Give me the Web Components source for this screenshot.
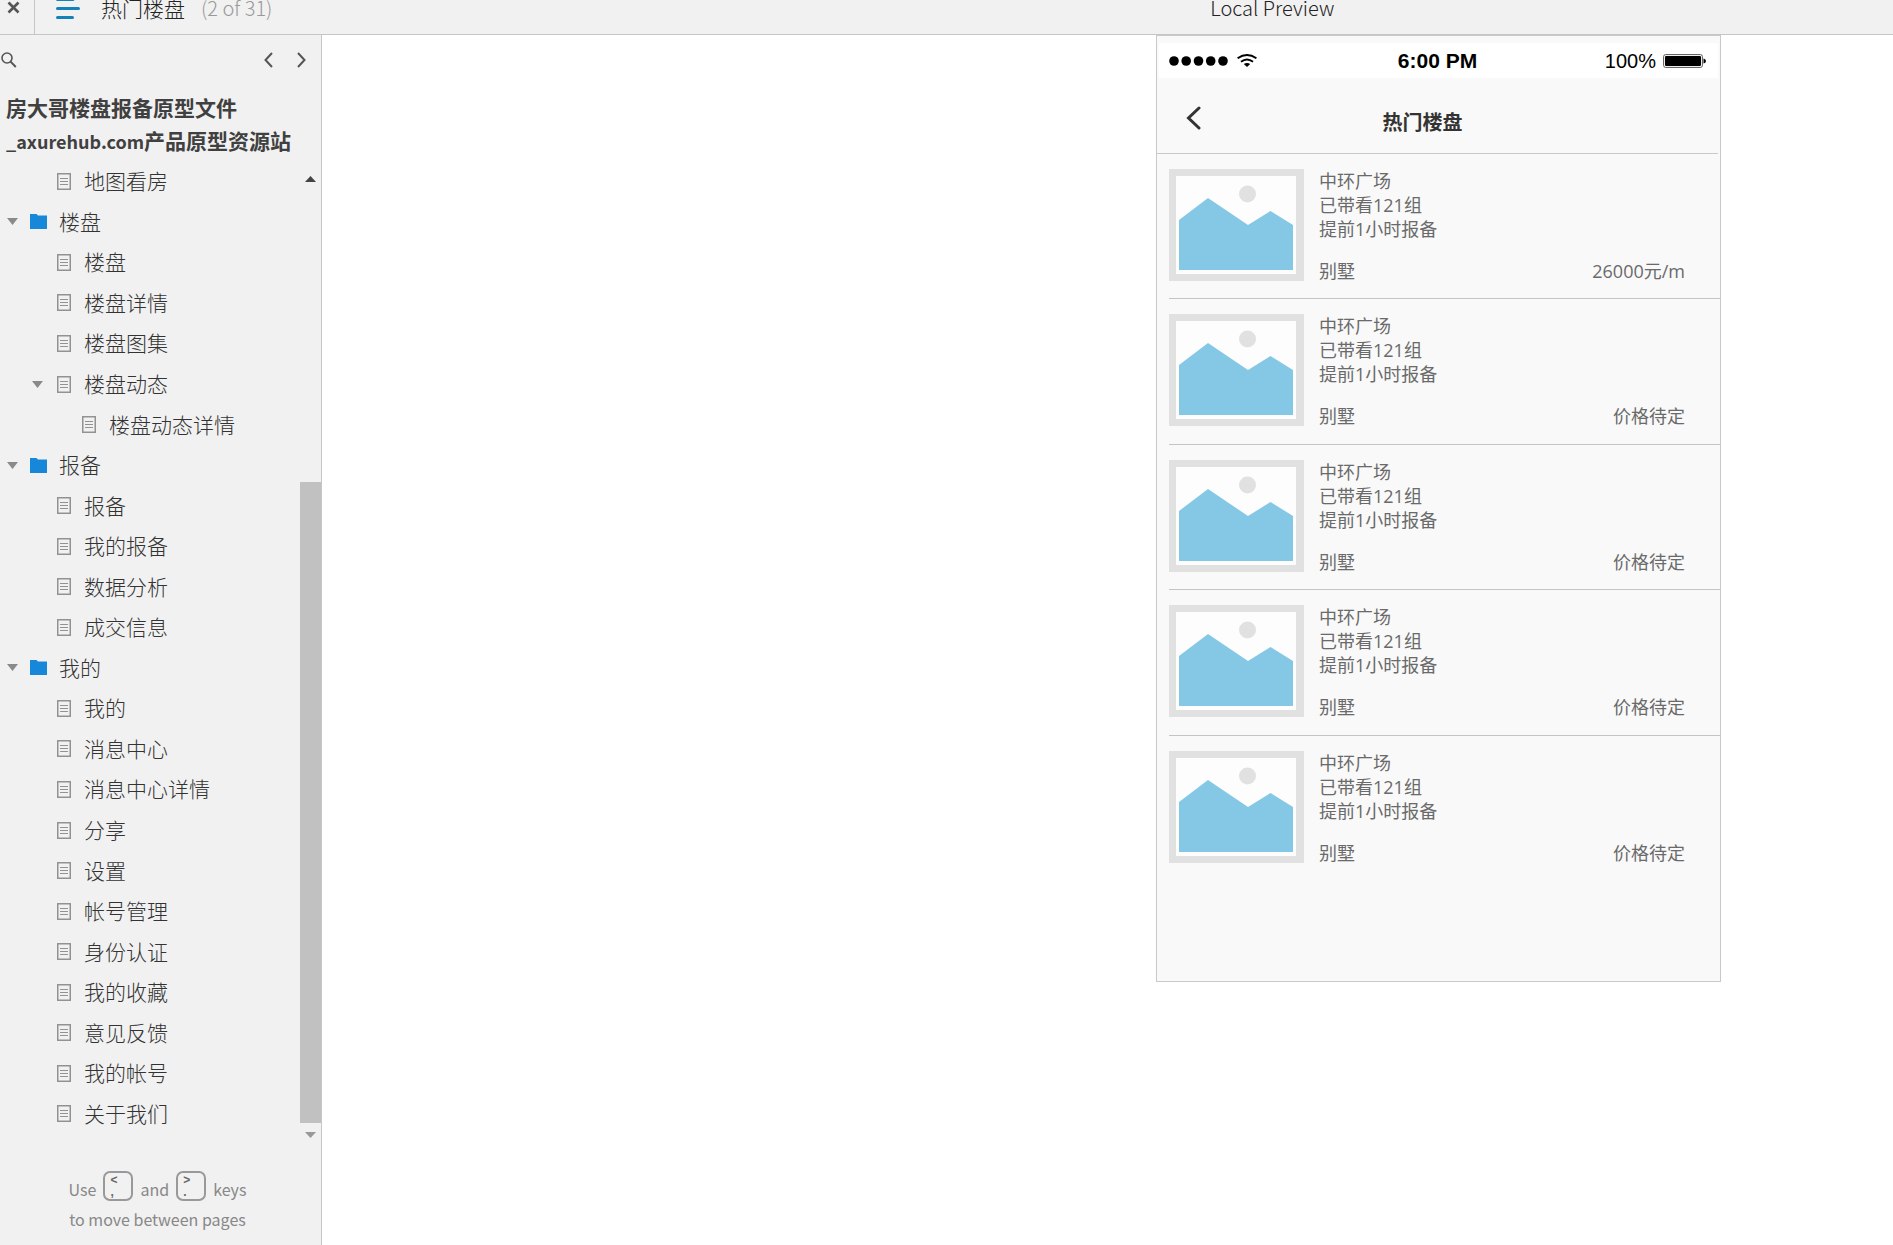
<!DOCTYPE html>
<html lang="zh-CN">
<head>
<meta charset="utf-8">
<title>热门楼盘</title>
<style>
html, body { height: 100%; margin: 0; }
body {
  display: flex; flex-direction: column; background: #fff; color: #333;
  font-family: "Noto Sans CJK SC", "Noto Sans", sans-serif; font-size: 21px; font-weight: 300;
}
.latin { font-size: 18px; }
</style>
</head>
<body>
<top-bar count="(2 of 31)"><span>热门楼盘</span><span slot="mode">Local Preview</span></top-bar>
<work-area>
  <side-panel slot="side">
    <span slot="title">房大哥楼盘报备原型文件<span class="latin">_axurehub.com</span>产品原型资源站</span>
    <tree-item level="1">地图看房</tree-item>
    <tree-item level="0" kind="folder" open>楼盘</tree-item>
    <tree-item level="1">楼盘</tree-item>
    <tree-item level="1">楼盘详情</tree-item>
    <tree-item level="1">楼盘图集</tree-item>
    <tree-item level="1" open>楼盘动态</tree-item>
    <tree-item level="2">楼盘动态详情</tree-item>
    <tree-item level="0" kind="folder" open>报备</tree-item>
    <tree-item level="1">报备</tree-item>
    <tree-item level="1">我的报备</tree-item>
    <tree-item level="1">数据分析</tree-item>
    <tree-item level="1">成交信息</tree-item>
    <tree-item level="0" kind="folder" open>我的</tree-item>
    <tree-item level="1">我的</tree-item>
    <tree-item level="1">消息中心</tree-item>
    <tree-item level="1">消息中心详情</tree-item>
    <tree-item level="1">分享</tree-item>
    <tree-item level="1">设置</tree-item>
    <tree-item level="1">帐号管理</tree-item>
    <tree-item level="1">身份认证</tree-item>
    <tree-item level="1">我的收藏</tree-item>
    <tree-item level="1">意见反馈</tree-item>
    <tree-item level="1">我的帐号</tree-item>
    <tree-item level="1">关于我们</tree-item>
  </side-panel>
  <phone-screen>
    <span slot="title">热门楼盘</span>
    <house-card price="26000元/m" category="别墅"><span>中环广场</span><span>已带看121组</span><span>提前1小时报备</span></house-card>
    <house-card price="价格待定" category="别墅"><span>中环广场</span><span>已带看121组</span><span>提前1小时报备</span></house-card>
    <house-card price="价格待定" category="别墅"><span>中环广场</span><span>已带看121组</span><span>提前1小时报备</span></house-card>
    <house-card price="价格待定" category="别墅"><span>中环广场</span><span>已带看121组</span><span>提前1小时报备</span></house-card>
    <house-card price="价格待定" category="别墅" last><span>中环广场</span><span>已带看121组</span><span>提前1小时报备</span></house-card>
  </phone-screen>
</work-area>
<script>
const base = `:host,*{box-sizing:border-box}
button{border:0;background:none;padding:0;margin:0;color:inherit;font:inherit;display:flex;cursor:pointer}
svg{display:block}`;

class Part extends HTMLElement {
  connectedCallback() {
    if (this.shadowRoot) return;
    this.attachShadow({ mode: 'open' }).innerHTML = `<style>${base}${this.css()}</style>${this.html()}`;
  }
}

customElements.define('top-bar', class extends Part {
  css() { return `
    :host{display:grid;grid-template-columns:minmax(0,1213fr) auto minmax(0,560fr);flex:none;height:35px;
      overflow:hidden;background:#f1f1f1;border-bottom:1px solid #c6c6c6;color:#222}
    .left{display:flex}
    .close{flex:none;width:35px;height:34px;border-right:1px solid #c6c6c6;padding:1px 0 0 7px}
    .menu{margin-left:21px}
    .row{display:flex;height:16px;align-items:center;line-height:30px;white-space:nowrap}
    .name{margin-left:21px}
    .count{margin-left:16px;color:#999;font-size:20px}
    .mode{font-size:20px}`; }
  html() { return `
    <div class="left">
      <button class="close" aria-label="Close"><svg width="13" height="13" viewBox="0 0 13 13"><path d="M1.5 1.5l10 10M11.5 1.5l-10 10" stroke="#555" stroke-width="2.6"/></svg></button>
      <button class="menu" aria-label="Pages"><svg width="24" height="20" viewBox="0 0 24 20"><path d="M1.5-.5H17M1.5 8.5H22.5M1.5 17.5H16.5" stroke="#1482ba" stroke-width="3" stroke-linecap="round"/></svg></button>
      <div class="row"><div class="name"><slot></slot></div><div class="count">${this.getAttribute('count')}</div></div>
    </div>
    <div class="row mode"><slot name="mode"></slot></div>`; }
});

customElements.define('work-area', class extends Part {
  css() { return `
    :host{display:flex;flex:1;min-height:0}
    aside{flex:none;width:322px;display:flex}
    main{flex:1;min-width:0;overflow:hidden;display:grid;grid-template-columns:minmax(0,834fr) 565px minmax(0,172fr);align-items:start}
    main ::slotted(*){grid-column:2}`; }
  html() { return `<aside><slot name="side"></slot></aside><main><slot></slot></main>`; }
});

customElements.define('side-panel', class extends Part {
  css() { return `
    :host{display:flex;flex-direction:column;flex:1;min-width:0;background:#f1f1f1;border-right:1px solid #c6c6c6}
    .tools{display:flex;align-items:center;height:49px;padding:0 15px 0 1px}
    .tools .prev{margin-left:auto;margin-right:24px}
    h1{margin:7px 6px 2px;font-size:21px;line-height:33px;font-weight:700;color:#404040}
    .body{display:flex;flex:1;min-height:0}
    nav{flex:1;display:flex;flex-direction:column;margin-bottom:13px}
    footer{display:flex;flex-direction:column;align-items:center;height:99px;padding:25px 6px 0 0;font-size:16px;color:#888;font-weight:400}
    .keys{display:flex;gap:7px;line-height:32px;height:32px;align-items:flex-start}
    .keys span{padding-top:2px}
    kbd{width:30px;height:30px;border:2px solid #999;border-radius:7px;padding:1px 0 0 5px;display:flex;flex-direction:column;
      font:700 12px/12px "Liberation Sans",sans-serif;color:#666}
    .move{line-height:32px}`; }
  html() { return `
    <div class="tools">
      <button aria-label="Search"><svg width="16" height="16" viewBox="0 0 16 16" fill="none" stroke="#555"><circle cx="6" cy="6" r="5" stroke-width="1.6"/><path d="M9.6 9.6l5.2 5.4" stroke-width="2"/></svg></button>
      <button class="prev" aria-label="Previous page"><svg width="9" height="16" viewBox="0 0 9 16"><path d="M8 1L1.5 8 8 15" fill="none" stroke="#555" stroke-width="2"/></svg></button>
      <button aria-label="Next page"><svg width="9" height="16" viewBox="0 0 9 16"><path d="M1 1L7.500 8 1 15" fill="none" stroke="#555" stroke-width="2"/></svg></button>
    </div>
    <h1><slot name="title"></slot></h1>
    <div class="body"><nav><slot></slot></nav><scroll-rail></scroll-rail></div>
    <footer>
      <div class="keys"><span>Use</span><kbd><b>&lt;</b><b>,</b></kbd><span>and</span><kbd><b>&gt;</b><b>.</b></kbd><span>keys</span></div>
      <div class="move">to move between pages</div>
    </footer>`; }
});

customElements.define('scroll-rail', class extends Part {
  css() { return `
    :host{display:flex;flex-direction:column;flex:none;width:21px;margin-top:7px}
    button{height:23px;align-items:center;justify-content:center}
    .gap{flex:292}
    .thumb{flex:641;background:#c1c1c1}`; }
  html() { return `
    <button aria-label="Scroll up"><svg width="11" height="6" viewBox="0 0 11 6"><path d="M0 6L5.500 0 11 6z" fill="#444"/></svg></button>
    <div class="gap"></div><div class="thumb"></div>
    <button aria-label="Scroll down"><svg width="11" height="6" viewBox="0 0 11 6"><path d="M0 0L5.500 6 11 0z" fill="#999"/></svg></button>`; }
});

customElements.define('tree-item', class extends Part {
  css() { return `
    :host{display:flex;flex:1;align-items:center;min-height:0;padding-left:calc(7px + 25px * ${this.getAttribute('level')})}
    .toggle{width:23px;flex:none;padding-top:2px}
    a{display:flex;align-items:center;color:inherit;text-decoration:none;line-height:30px;white-space:nowrap}
    a svg{margin:2px 12px 0 0}
    a svg.page{margin:2px 13px 0 2px}`; }
  html() {
    const icon = this.getAttribute('kind') === 'folder'
      ? `<svg width="17" height="15" viewBox="0 0 17 15"><path d="M0 0H6.500L8 1.500H17V15H0z" fill="#1787d9"/></svg>`
      : `<svg class="page" width="14" height="17" viewBox="0 0 14 17" fill="none" stroke="#929292"><rect x=".75" y=".75" width="12.500" height="15.500" stroke-width="1.500"/><path d="M3 5.500H11M3 8.500H11M3 11.500H11" stroke-width="1.200"/></svg>`;
    const arrow = `<svg width="11" height="7" viewBox="0 0 11 7"><path d="M0 0H11L5.500 7z" fill="#8a8a8a"/></svg>`;
    return (this.hasAttribute('open') ? `<button class="toggle" aria-label="Collapse">${arrow}</button>` : `<span class="toggle"></span>`)
      + `<a href="#">${icon}<slot></slot></a>`;
  }
});

customElements.define('phone-screen', class extends Part {
  css() { return `
    :host{display:flex;flex-direction:column;min-height:947px;background:#f9f9f9;border:1px solid #c9c9c9;padding-bottom:100px}
    .status{display:grid;grid-template-columns:1fr auto 1fr;align-items:center;height:35px;margin:7px 2px 0;padding:0 12px 0 10px;
      background:#fff;color:#000;font:400 20px/24px "Liberation Sans",sans-serif}
    .signal,.power{display:flex;align-items:center;gap:9px}
    .power{justify-content:flex-end;gap:7px}
    .time{font-weight:700;font-size:21px}
    .bar{display:flex;align-items:center;height:76px;margin-right:2px;border-bottom:1px solid #c9c9c9}
    .bar button{margin:5px 0 0 29px}
    h2{flex:1;margin:13px 74px 0 0;text-align:center;font-size:20px;line-height:30px;font-weight:700;color:#333}
    .list{flex:1;display:flex;flex-direction:column}`; }
  html() { return `
    <div class="status">
      <div class="signal">
        <svg width="59" height="10" viewBox="0 0 59 10"><circle cx="5" cy="5" r="4.800"/><circle cx="17.200" cy="5" r="4.800"/><circle cx="29.500" cy="5" r="4.800"/><circle cx="41.700" cy="5" r="4.800"/><circle cx="54" cy="5" r="4.800"/></svg>
        <svg width="20" height="13" viewBox="0 0 20 13" fill="none" stroke="#000" stroke-width="2"><path d="M.6 4.300Q10-2.200 19.400 4.300M4 7.800Q10 3.200 16 7.800"/><path d="M6.800 10Q10 7.800 13.200 10L10 13z" fill="#000" stroke="none"/></svg>
      </div>
      <div class="time">6:00 PM</div>
      <div class="power"><span>100%</span>
        <svg width="43" height="14" viewBox="0 0 43 14"><rect x=".6" y=".6" width="38.800" height="12.800" rx="2" fill="#fff" stroke="#555"/><rect x="2" y="2" width="36" height="10" rx="1"/><path d="M40.500 4.500Q43 5 43 7T40.500 9.500z"/></svg>
      </div>
    </div>
    <div class="bar">
      <button aria-label="Back"><svg width="15" height="24" viewBox="0 0 15 24"><path d="M13 2L2.500 12 13 22" fill="none" stroke="#333" stroke-width="3" stroke-linecap="round"/></svg></button>
      <h2><slot name="title"></slot></h2>
    </div>
    <div class="list"><slot></slot></div>`; }
});

customElements.define('house-card', class extends Part {
  css() { return `
    :host{display:flex;flex:1;margin-left:12px;padding-top:15px;gap:15px;color:#6a6a6a;
      border-bottom:1px solid ${this.hasAttribute('last') ? 'transparent' : '#c4c4c4'};
      font:400 18px/24px "Open Sans","Noto Sans CJK SC",sans-serif}
    .text{flex:1;display:flex;flex-direction:column;padding-right:35px}
    ::slotted(span){display:block}
    .foot{display:flex;justify-content:space-between;margin-top:18px}`; }
  html() { return `
    <svg width="135" height="112" viewBox="0 0 135 112"><rect width="135" height="112" fill="#e1e1e1"/><rect x="7" y="7" width="120" height="98" fill="#fdfdfd"/><circle cx="78.500" cy="25" r="8.500" fill="#e1e1e1"/><path d="M10 51L39 29 79 56 101.500 42 124 56V101H10z" fill="#85c8e6"/></svg>
    <div class="text"><slot></slot><div class="foot"><span>${this.getAttribute('category')}</span><span>${this.getAttribute('price')}</span></div></div>`; }
});
</script>
</body>
</html>
